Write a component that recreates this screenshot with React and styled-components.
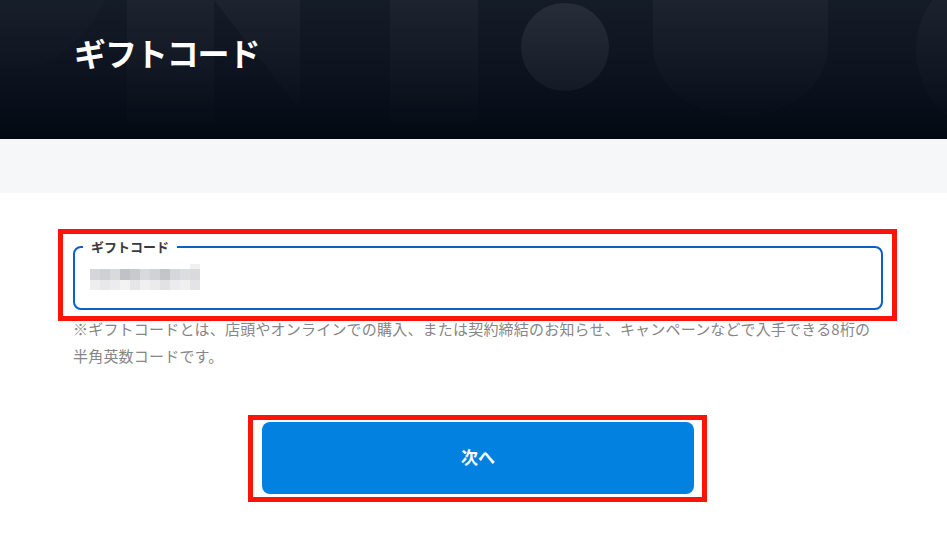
import React from "react";
import styled, { createGlobalStyle } from "styled-components";

const GlobalStyle = createGlobalStyle`
  html, body { margin: 0; padding: 0; background: #ffffff; }
  body { font-family: "Noto Sans CJK JP", "Noto Sans", sans-serif; }
  * { box-sizing: border-box; }
`;

const Page = styled.div`
  width: 947px;
  min-height: 543px;
  background: #ffffff;
`;

const Header = styled.header`
  position: relative;
  height: 139px;
  padding: 28px 0 0 74px;
  overflow: hidden;
  background: linear-gradient(180deg, #141c28 0%, #0c131e 55%, #030913 100%);
`;

const HeaderArt = styled.svg`
  position: absolute;
  inset: 0;
  width: 100%;
  height: 100%;
`;

const Title = styled.h1`
  position: relative;
  margin: 0;
  font-size: 32px;
  line-height: 48px;
  font-weight: 700;
  color: #ffffff;
  letter-spacing: -1.1px;
`;

const Band = styled.div`
  height: 54px;
  background: #f5f7f9;
`;

const Main = styled.main`
  display: flex;
  flex-direction: column;
  padding: 44px 64px 40px 73px;
`;

const Marked = styled.div`
  position: relative;
  &::after {
    content: "";
    position: absolute;
    top: ${(p) => p.$t}px;
    left: ${(p) => p.$l}px;
    right: ${(p) => p.$r}px;
    bottom: ${(p) => p.$b}px;
    border: 5px solid #fb1407;
    pointer-events: none;
  }
`;

const Field = styled.fieldset`
  margin: 0;
  padding: 0 15px 0 15px;
  height: 73px;
  border: 2px solid #0b5fc7;
  border-radius: 8px;
  display: flex;
  align-items: center;
`;

const Legend = styled.legend`
  margin-left: -7px;
  padding: 0 8px;
  font-size: 13px;
  line-height: 20px;
  font-weight: 700;
  color: #3b3b3b;
`;

const Mosaic = styled.div`
  display: grid;
  grid-template-columns: repeat(11, 10px);
  grid-template-rows: 5px 11px 10px;
  margin-top: -11px;
`;

const Cell = styled.span`
  display: block;
  background: ${(p) => p.$c};
`;

const Help = styled.p`
  margin: 6px 0 0;
  font-size: 15px;
  line-height: 26.5px;
  letter-spacing: 0.2px;
  color: #868686;
`;

const ButtonRow = styled.div`
  display: flex;
  justify-content: center;
  margin-top: 53px;
`;

const NextButton = styled.button`
  width: 432px;
  height: 72px;
  padding: 0 0 4px;
  border: none;
  border-radius: 8px;
  background: #0381e0;
  color: #ffffff;
  font-family: inherit;
  font-size: 17px;
  font-weight: 700;
  cursor: pointer;
`;

const mosaic = [
  ["transparent","transparent","transparent","transparent","transparent","transparent","transparent","transparent","transparent","transparent","#f1f1f2"],
  ["#d5d6d9","#cfd0d3","#d9dadc","#c1c2c6","#c9cacd","#d8d9dc","#d1d2d5","#c4c5c8","#d6d7da","#dcdddf","#d9dadc"],
  ["#eeeeef","#e8e8ea","#ececee","#f3f3f4","#e6e6e8","#f0f0f1","#ebebec","#e2e2e4","#ececee","#f0f0f1","#e4e4e6"],
];

export default function App() {
  return (
    <>
      <GlobalStyle />
      <Page>
        <Header>
          <HeaderArt viewBox="0 0 947 139" preserveAspectRatio="none" aria-hidden="true">
            <defs>
              <linearGradient id="fade" x1="0" y1="0" x2="0" y2="1">
                <stop offset="0" stopColor="#ffffff" stopOpacity="0.035" />
                <stop offset="1" stopColor="#ffffff" stopOpacity="0.005" />
              </linearGradient>
              <linearGradient id="fadeStrong" x1="0" y1="0" x2="0" y2="1">
                <stop offset="0" stopColor="#ffffff" stopOpacity="0.08" />
                <stop offset="1" stopColor="#ffffff" stopOpacity="0.04" />
              </linearGradient>
            </defs>
            <circle cx="-10" cy="-50" r="125" fill="url(#fade)" />
            <rect x="127" y="0" width="87" height="125" fill="url(#fade)" />
            <polygon points="214,0 300,0 300,110" fill="url(#fade)" />
            <rect x="390" y="0" width="88" height="124" fill="url(#fade)" />
            <circle cx="565" cy="47" r="44" fill="url(#fadeStrong)" />
            <path d="M653 0 H828 V46 A87.5 70 0 0 1 653 46 Z" fill="url(#fade)" />
            <circle cx="1000" cy="50" r="84" fill="url(#fade)" />
          </HeaderArt>
          <Title>ギフトコード</Title>
        </Header>
        <Band />
        <Main>
          <Marked $t={-8} $l={-15} $r={-14} $b={-11}>
            <Field>
              <Legend>ギフトコード</Legend>
              <Mosaic aria-label="入力済みのコード">
                {mosaic.flatMap((row, ri) =>
                  row.map((c, ci) => <Cell key={`${ri}-${ci}`} $c={c} />)
                )}
              </Mosaic>
            </Field>
          </Marked>
          <Help>
            ※ギフトコードとは、店頭やオンラインでの購入、または契約締結のお知らせ、キャンペーンなどで入手できる8桁の半角英数コードです。
          </Help>
          <ButtonRow>
            <Marked $t={-7} $l={-14} $r={-13} $b={-8}>
              <NextButton type="button">次へ</NextButton>
            </Marked>
          </ButtonRow>
        </Main>
      </Page>
    </>
  );
}
